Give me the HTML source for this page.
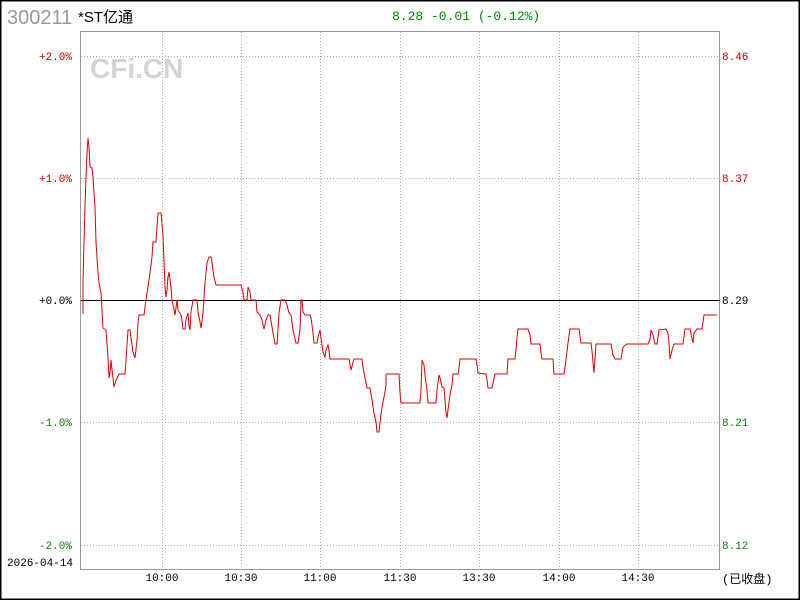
<!DOCTYPE html>
<html><head><meta charset="utf-8"><style>
body{margin:0;width:800px;height:600px;overflow:hidden;background:#fff}
</style></head><body>
<svg width="800" height="600" xmlns="http://www.w3.org/2000/svg" style="display:block">
<rect x="0.5" y="0.5" width="799" height="599" fill="#fff" stroke="#000" stroke-width="2"/>
<text x="7" y="24" font-family="Liberation Sans, sans-serif" font-size="20" fill="#999">300211</text>
<text x="78" y="22" font-family="Liberation Sans, 'Noto Sans CJK SC', sans-serif" font-size="15" fill="#000">*ST亿通</text>
<text x="392" y="20" font-family="Liberation Mono, monospace" font-size="13" fill="#080">8.28 -0.01 (-0.12%)</text>
<text x="90" y="78" font-family="Liberation Sans, sans-serif" font-size="28" font-weight="bold" fill="#d4d4d4">CFi.CN</text>
<g stroke="#aaa" stroke-width="1" stroke-dasharray="1,2">
<line x1="81" y1="56.5" x2="720" y2="56.5"/><line x1="81" y1="178.5" x2="720" y2="178.5"/>
<line x1="81" y1="422.5" x2="720" y2="422.5"/><line x1="81" y1="545.5" x2="720" y2="545.5"/>
<line x1="162.5" y1="32" x2="162.5" y2="569"/><line x1="241.5" y1="32" x2="241.5" y2="569"/>
<line x1="320.5" y1="32" x2="320.5" y2="569"/><line x1="400.5" y1="32" x2="400.5" y2="569"/>
<line x1="479.5" y1="32" x2="479.5" y2="569"/><line x1="559.5" y1="32" x2="559.5" y2="569"/>
<line x1="638.5" y1="32" x2="638.5" y2="569"/>
</g>
<rect x="80.5" y="31.5" width="639" height="538" fill="none" stroke="#999"/>
<line x1="81" y1="300.5" x2="720" y2="300.5" stroke="#000"/>
<polyline fill="none" stroke="#d00" stroke-width="1" points="83,314 83,281 84,243 85,205 86,178 87,153 88,138 89,147 90,167 92,168 93,177 95,208 96,242 98,273 99,283 101,293 102,310 103,328 106,330 108,357 109,378 110,373 111,360 112,370 113,378 114,387 116,380 119,374 125,374 126,362 127,345 128,330 130,330 131,338 132,345 133,352 135,358 137,340 138,323 139,315 144,315 145,307 147,293 148,287 150,273 152,257 153,242 156,242 157,227 158,213 161,213 163,235 164,263 165,287 166,297 167,290 168,277 169,272 171,287 172,300 174,310 175,315 177,300 178,310 181,315 182,320 183,329 185,329 186,320 188,313 189,326 190,330 191,312 193,300 197,300 198,312 200,322 201,328 203,313 205,283 207,263 209,257 211,257 212,263 214,277 216,285 241,285 243,293 244,300 247,300 248,287 250,292 251,300 256,300 257,312 260,315 262,320 264,329 266,320 268,315 270,315 272,327 275,344 277,344 278,330 279,313 281,300 285,300 287,305 289,313 291,315 293,330 296,343 298,343 300,330 301,300 302,300 303,312 305,315 310,315 311,318 312,325 313,333 314,343 317,343 318,337 320,330 321,338 323,352 325,357 326,350 328,345 329,350 330,359 349,359 351,370 354,359 362,359 363,367 365,378 367,388 370,388 372,400 374,413 376,422 377,432 379,432 380,422 382,407 384,397 386,386 386,374 399,374 400,393 401,403 420,403 421,390 422,360 424,365 425,375 427,390 428,403 436,403 437,390 439,375 440,378 442,387 444,388 445,400 446,412 447,418 448,410 450,395 452,385 453,374 458,374 459,368 460,359 476,359 477,365 478,373 486,374 487,379 488,388 492,388 493,383 495,374 507,374 508,359 515,359 516,349 517,338 518,329 528,329 530,335 531,344 540,344 541,353 542,359 553,359 554,374 564,374 566,360 568,343 570,329 579,329 581,343 591,343 592,351 594,373 596,344 611,344 613,355 615,359 621,359 623,347 627,344 648,344 650,339 651,330 653,335 655,344 657,344 659,330 666,329 668,333 669,343 670,359 672,350 674,344 683,344 685,329 690,329 692,339 693,343 694,333 697,329 702,329 704,315 717,315"/>
<g font-family="Liberation Mono, monospace" font-size="11" text-anchor="end">
<text x="72" y="60" fill="#c00">+2.0%</text>
<text x="72" y="182" fill="#c00">+1.0%</text>
<text x="72" y="304" fill="#000">+0.0%</text>
<text x="72" y="426" fill="#080">-1.0%</text>
<text x="72" y="549" fill="#080">-2.0%</text>
</g>
<g font-family="Liberation Mono, monospace" font-size="11">
<text x="722" y="60" fill="#c00">8.46</text>
<text x="722" y="182" fill="#c00">8.37</text>
<text x="722" y="304" fill="#000">8.29</text>
<text x="722" y="426" fill="#080">8.21</text>
<text x="722" y="549" fill="#080">8.12</text>
<text x="7" y="566" fill="#000">2026-04-14</text>
</g>
<g font-family="Liberation Mono, monospace" font-size="11" text-anchor="middle" fill="#000">
<text x="162" y="581">10:00</text><text x="241" y="581">10:30</text><text x="320" y="581">11:00</text>
<text x="400" y="581">11:30</text><text x="479" y="581">13:30</text><text x="559" y="581">14:00</text>
<text x="638" y="581">14:30</text>
</g>
<text x="722" y="583" font-family="Liberation Mono, 'Noto Sans CJK SC', monospace" font-size="12" fill="#000">(已收盘)</text>
</svg>
</body></html>
